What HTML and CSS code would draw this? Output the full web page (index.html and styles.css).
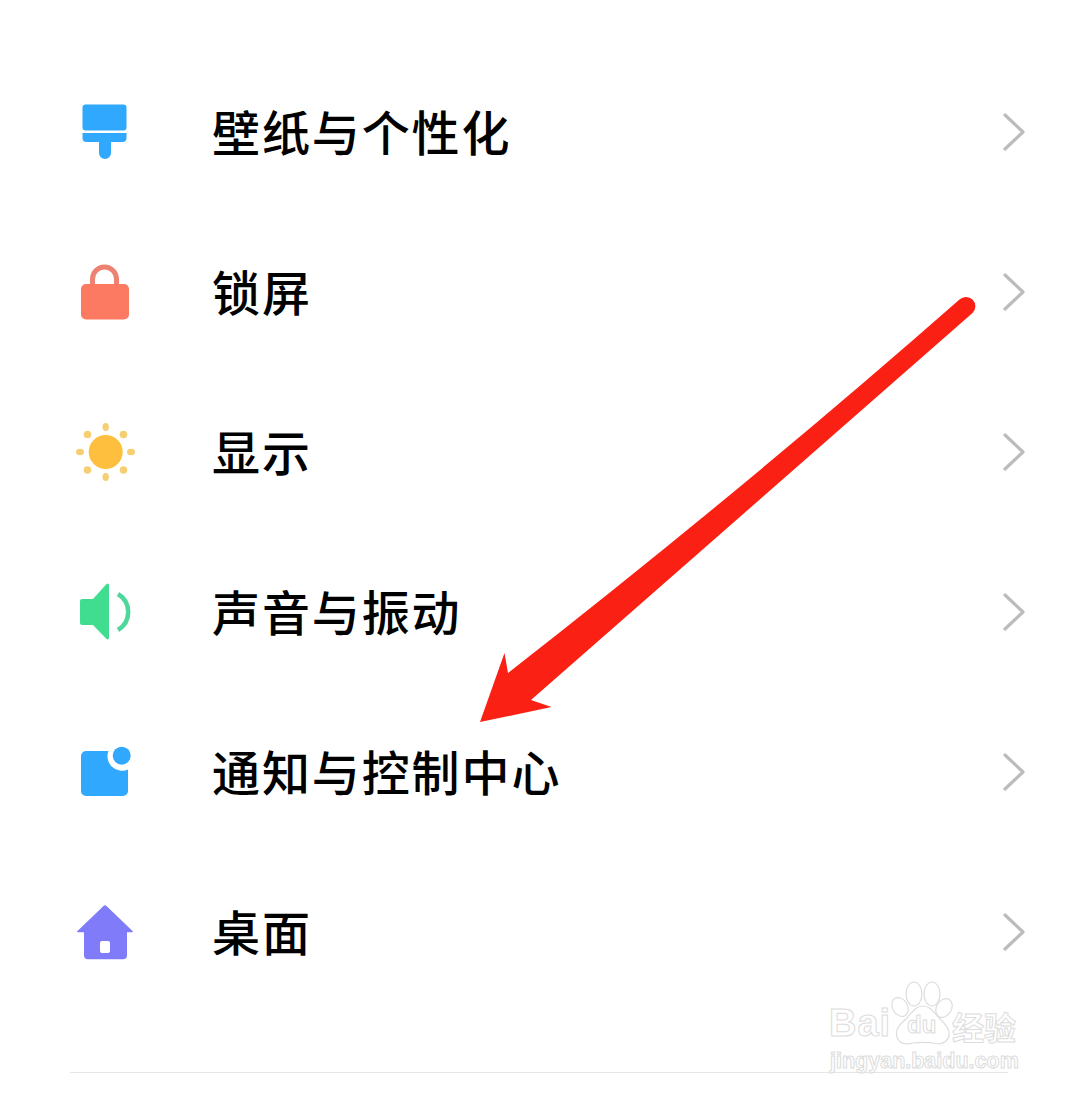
FILE: index.html
```html
<!DOCTYPE html>
<html lang="zh-CN">
<head>
<meta charset="utf-8">
<title>设置</title>
<link rel="stylesheet" href="styles.css">
</head>
<body>
<main class="page">
  <ul class="list">
    <li class="row">
      <svg class="icon" viewBox="75 102 60 60"><rect class="blue" x="82.500" y="104.500" width="44" height="26" rx="3"/><path class="blue" d="M82.500 133h44v5a4 4 0 0 1-4 4H111v11a6 6 0 0 1-12 0V142H86.500a4 4 0 0 1-4-4z"/></svg>
      <span class="label">壁纸与个性化</span>
      <svg class="chev" viewBox="0 0 26 40"><path d="M3 3l18 17L3 37"/></svg>
    </li>
    <li class="row">
      <svg class="icon" viewBox="75 262 60 60"><path class="shackle" d="M92.500 286v-7a12 12 0 0 1 24 0v7"/><rect class="coral" x="81" y="284" width="48" height="35.500" rx="5"/></svg>
      <span class="label">锁屏</span>
      <svg class="chev" viewBox="0 0 26 40"><path d="M3 3l18 17L3 37"/></svg>
    </li>
    <li class="row">
      <svg class="icon" viewBox="75 421 60 60"><g class="rays"><ellipse cx="105.700" cy="426" rx="3.200" ry="4"/><ellipse cx="105.700" cy="476" rx="3.200" ry="4"/><ellipse cx="80" cy="451" rx="4" ry="3.200"/><ellipse cx="131" cy="451" rx="4" ry="3.200"/><circle cx="87.500" cy="433.500" r="3.800"/><circle cx="123.500" cy="433.500" r="3.800"/><circle cx="87.500" cy="469" r="3.800"/><circle cx="123.500" cy="469" r="3.800"/></g><circle class="sun" cx="105.700" cy="451" r="17"/></svg>
      <span class="label">显示</span>
      <svg class="chev" viewBox="0 0 26 40"><path d="M3 3l18 17L3 37"/></svg>
    </li>
    <li class="row">
      <svg class="icon" viewBox="75 582 60 60"><path class="green" d="M82 599h11l13.500-15a1.500 1.500 0 0 1 2.500 1v53a1.500 1.500 0 0 1-2.500 1L93 625H82a2 2 0 0 1-2-2v-22a2 2 0 0 1 2-2z"/><path class="wave" d="M118 594a21 21 0 0 1 0 36"/></svg>
      <span class="label">声音与振动</span>
      <svg class="chev" viewBox="0 0 26 40"><path d="M3 3l18 17L3 37"/></svg>
    </li>
    <li class="row">
      <svg class="icon" viewBox="75 742 60 60"><path class="blue" d="M86 751h22.500a14.500 14.500 0 0 0 19.500 18.500V791a5 5 0 0 1-5 5H86a5 5 0 0 1-5-5v-35a5 5 0 0 1 5-5z"/><circle class="blue" cx="121.700" cy="755.700" r="9"/></svg>
      <span class="label">通知与控制中心</span>
      <svg class="chev" viewBox="0 0 26 40"><path d="M3 3l18 17L3 37"/></svg>
    </li>
    <li class="row">
      <svg class="icon" viewBox="75 902 60 60"><path class="violet" fill-rule="evenodd" d="M103.500 906a2 2 0 0 1 3 0l26 25a.6.6 0 0 1-.5 1.200h-5v23a4 4 0 0 1-4 4H88a4 4 0 0 1-4-4v-23h-6a.6.6 0 0 1-.5-1.200zM102 941a2 2 0 0 0-2 2v8a2 2 0 0 0 2 2h6a2 2 0 0 0 2-2v-8a2 2 0 0 0-2-2z"/></svg>
      <span class="label">桌面</span>
      <svg class="chev" viewBox="0 0 26 40"><path d="M3 3l18 17L3 37"/></svg>
    </li>
  </ul>
  <hr class="rule">

  <svg class="arrow" viewBox="0 0 1080 1098"><path d="M972.500 313L531 700l20.500 7L480 722l24.500-69 3.500 20Q745 488 959.500 299.500a9 9 0 0 1 13 13.500z"/></svg>

  <div class="mark">
    <svg class="paw" viewBox="0 0 220 110"><ellipse cx="94" cy="24" rx="8" ry="12"/><ellipse cx="112" cy="24" rx="8" ry="12"/><ellipse cx="80" cy="37" rx="7.500" ry="10" transform="rotate(-30 80 37)"/><ellipse cx="124" cy="38" rx="7.500" ry="10" transform="rotate(30 124 38)"/><path d="M103 36c8 0 11 7 17 13 7 6 10 11 9 17-2 7-9 9-16 7-7-1-13-1-20 0-8 2-14 0-16-6-2-7 2-12 9-18 6-6 9-13 17-13z"/></svg>
    <span class="mark-bai">Bai</span>
    <span class="mark-du">du</span>
    <span class="mark-cn">经验</span>
    <span class="mark-url">jingyan.baidu.com</span>
  </div>
</main>
</body>
</html>
```
FILE: styles.css
```css
* { box-sizing: border-box; }
html, body { margin: 0; padding: 0; background: #fff; }
.page {
  position: relative;
  width: 1080px;
  height: 1098px;
  overflow: hidden;
  font-family: "Noto Sans CJK SC", "Noto Sans", sans-serif;
}
.list { list-style: none; margin: 0; padding: 52px 0 0; }
.row {
  display: flex;
  align-items: center;
  height: 160px;
  padding: 0 52px 0 75px;
}
.icon { width: 60px; height: 60px; flex: none; }
.label {
  flex: 1;
  margin: 0 0 4px 77px;
  font-size: 48px;
  line-height: 60px;
  font-weight: 500;
  letter-spacing: 1.900px;
  color: #000;
}
.chev { width: 26px; height: 40px; flex: none; }
.chev path { fill: none; stroke: #bcbcbc; stroke-width: 3.200px; stroke-linecap: round; stroke-linejoin: round; }
.blue { fill: #2fa8fd; }
.coral { fill: #fd7a62; }
.shackle { fill: none; stroke: #ee8272; stroke-width: 5px; }
.sun { fill: #ffbf3e; }
.rays { fill: #f5cf72; }
.green { fill: #40dd91; }
.wave { fill: none; stroke: #4ed79a; stroke-width: 4.500px; }
.violet { fill: #7f7bf9; }
.rule { height: 1px; margin: 60px 72px 0 70px; border: 0; background: #e6e6e6; }
.arrow { position: absolute; left: 0; top: 0; width: 1080px; height: 1098px; }
.arrow path { fill: #fb2014; }
.mark { position: absolute; left: 820px; top: 970px; width: 220px; height: 110px; }
.mark span {
  position: absolute;
  font-family: "Liberation Sans", sans-serif;
  font-weight: 700;
  color: #fff;
  -webkit-text-stroke: 1px #dcdcdc;
  white-space: nowrap;
}
.paw { position: absolute; left: 0; top: 0; width: 220px; height: 110px; }
.paw ellipse, .paw path { fill: #fff; stroke: #dddddd; stroke-width: 1.200px; }
.mark-bai { left: 9px; top: 31px; font-size: 38px; line-height: 44px; letter-spacing: 1px; }
.mark-du { left: 87px; top: 42px; font-size: 24px; line-height: 26px; }
.mark span.mark-cn { left: 132px; top: 36px; font-family: "Noto Sans CJK SC", sans-serif; font-size: 32px; line-height: 40px; }
.mark-url { left: 10px; top: 78px; font-size: 21.500px; line-height: 26px; letter-spacing: 0; }
```
